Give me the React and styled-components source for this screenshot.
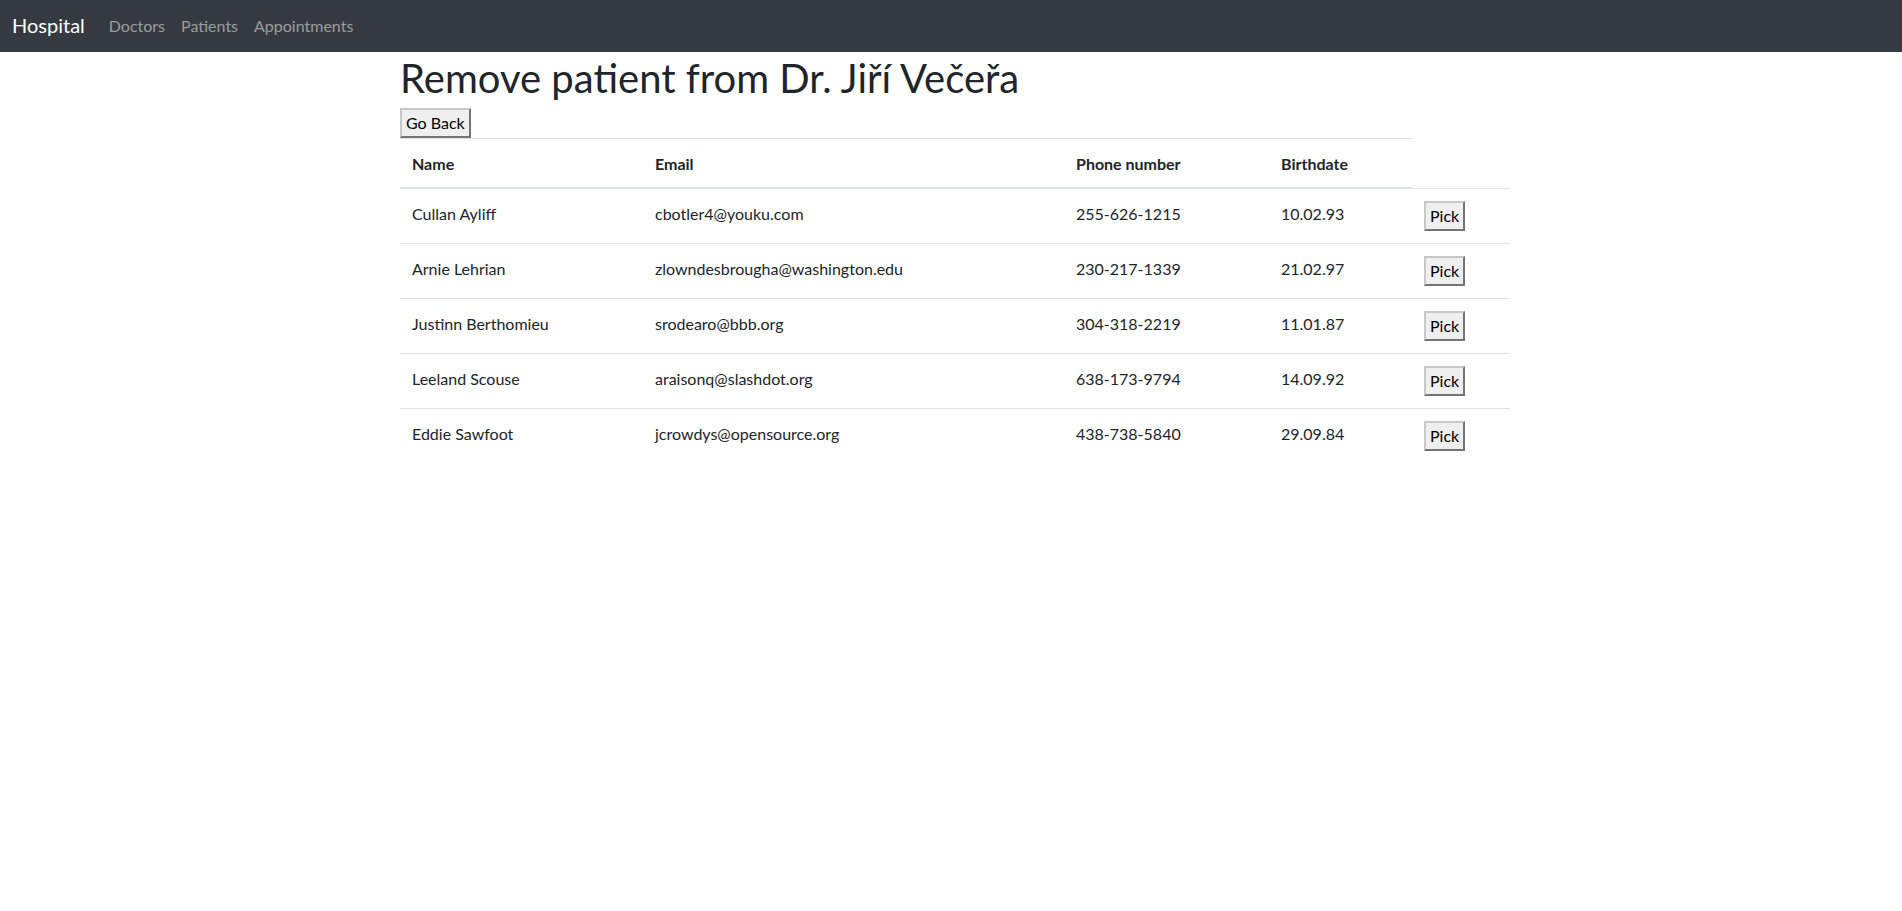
import styled, { createGlobalStyle } from "styled-components";

const GlobalStyle = createGlobalStyle`
  body {
    margin: 0;
    font-family: Lato, "Noto Sans", "Liberation Sans", sans-serif;
    font-size: 16px;
    line-height: 1.5;
    color: #212529;
    background: #fff;
  }
`

const patients = [
  { name: "Cullan Ayliff", email: "cbotler4@youku.com", phone: "255-626-1215", birthdate: "10.02.93" },
  { name: "Arnie Lehrian", email: "zlowndesbrougha@washington.edu", phone: "230-217-1339", birthdate: "21.02.97" },
  { name: "Justinn Berthomieu", email: "srodearo@bbb.org", phone: "304-318-2219", birthdate: "11.01.87" },
  { name: "Leeland Scouse", email: "araisonq@slashdot.org", phone: "638-173-9794", birthdate: "14.09.92" },
  { name: "Eddie Sawfoot", email: "jcrowdys@opensource.org", phone: "438-738-5840", birthdate: "29.09.84" },
]

export default function App() {
  return (
    <>
      <GlobalStyle />
      <Navbar>
        <Brand href="#">Hospital</Brand>
        <NavList>
          <NavLink href="#">Doctors</NavLink>
          <NavLink href="#">Patients</NavLink>
          <NavLink href="#">Appointments</NavLink>
        </NavList>
      </Navbar>
      <Container>
        <Title>Remove patient from Dr. Jiří Večeřa</Title>
        <NativeButton>Go Back</NativeButton>
        <Table>
          <colgroup>
            <col style={{ width: 243 }} />
            <col style={{ width: 421 }} />
            <col style={{ width: 205 }} />
            <col style={{ width: 143 }} />
            <col style={{ width: 98 }} />
          </colgroup>
          <thead>
            <tr>
              <Th>Name</Th>
              <Th>Email</Th>
              <Th>Phone number</Th>
              <Th>Birthdate</Th>
            </tr>
          </thead>
          <tbody>
            {patients.map((p) => (
              <tr key={p.email}>
                <Td>{p.name}</Td>
                <Td>{p.email}</Td>
                <Td>{p.phone}</Td>
                <Td>{p.birthdate}</Td>
                <Td><NativeButton>Pick</NativeButton></Td>
              </tr>
            ))}
          </tbody>
        </Table>
      </Container>
    </>
  )
}

const Navbar = styled.nav`
  display: flex;
  align-items: center;
  height: 52px;
  padding: 0 12px;
  background-color: #343a40;
`

const Brand = styled.a`
  font-size: 20px;
  line-height: 30px;
  color: #fff;
  text-decoration: none;
  margin-right: 16px;
  padding-bottom: 2px;
`

const NavList = styled.div`
  display: flex;
`

const NavLink = styled.a`
  padding: 8px;
  color: rgba(255, 255, 255, 0.5);
  text-decoration: none;
`

const Container = styled.div`
  width: 1110px;
  margin: 0 auto;
  padding-left: 8px;
`

const Title = styled.h1`
  margin: 0 0 8px 0;
  padding-top: 4px;
  font-size: 40px;
  font-weight: 400;
  line-height: 44px;
`

const NativeButton = styled.button`
  font-family: inherit;
  font-size: 16px;
  line-height: 1.5;
  color: #000;
  padding: 1px 4px;
  background: #efefef;
  border: 2px outset #c8c8c8;
  border-radius: 0;
  margin: 0;
`

const Table = styled.table`
  width: 1110px;
  table-layout: fixed;
  border-collapse: collapse;
  color: #212529;
`

const Th = styled.th`
  text-align: left;
  font-weight: 700;
  padding: 13px 12px 11px;
  border-top: 1px solid #dee2e6;
  border-bottom: 2px solid #dee2e6;
  vertical-align: bottom;
`

const Td = styled.td`
  padding: 13px 12px 11px;
  border-top: 1px solid #dee2e6;
  vertical-align: top;

  & > button {
    margin: -1px 0 1px;
  }
`
